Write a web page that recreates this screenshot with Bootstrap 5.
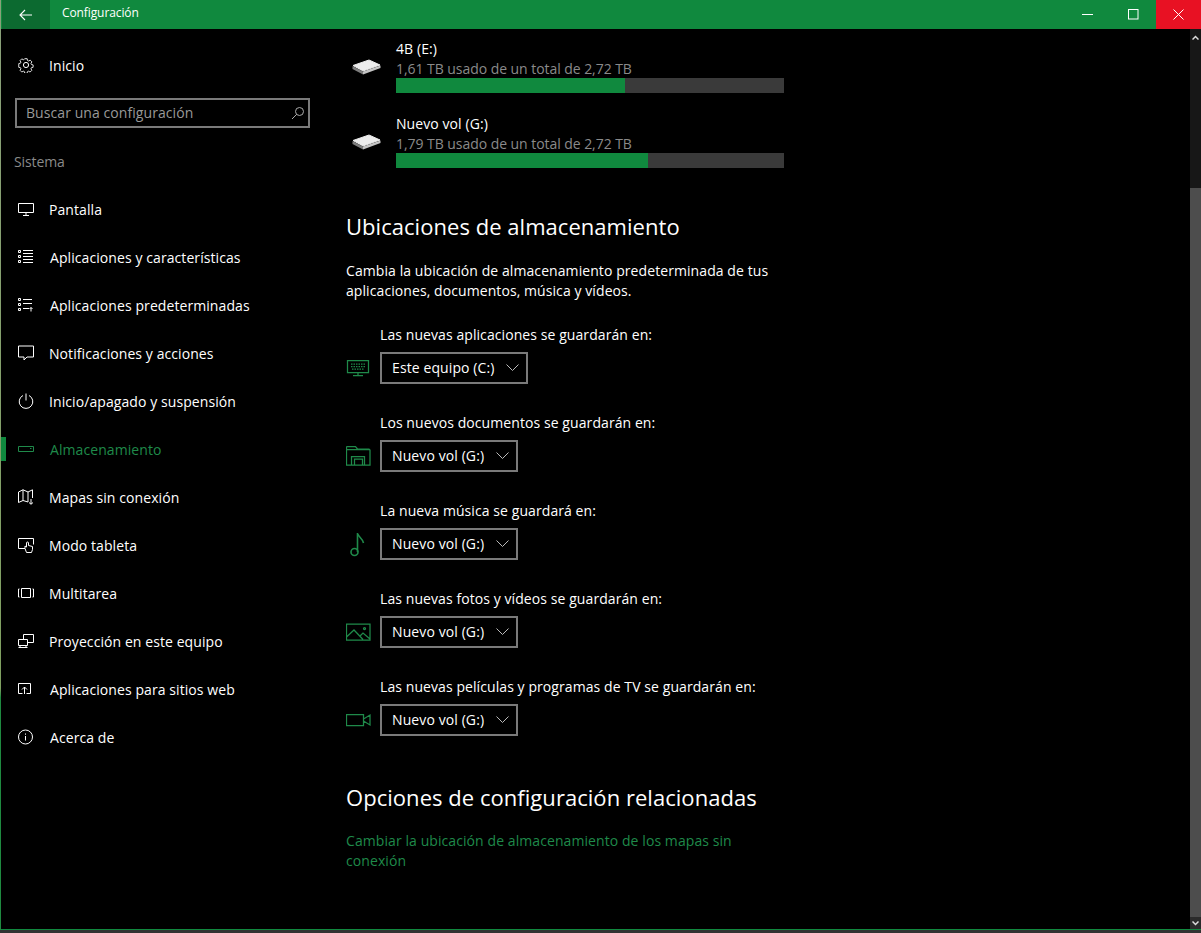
<!DOCTYPE html>
<html lang="es">
<head>
<meta charset="utf-8">
<title>Configuración</title>
<link href="https://cdn.jsdelivr.net/npm/bootstrap@5.3.0/dist/css/bootstrap.min.css" rel="stylesheet">
<style>
html,body{height:100%;background:#000;overflow:hidden}
body{font-family:"Open Sans","Noto Sans","Liberation Sans",sans-serif;font-size:14px;line-height:20px;color:#fff;letter-spacing:.08px}
.win-shell{height:933px;border-bottom:3px solid #333;background:#000;position:relative}
.win-edge{position:absolute;left:0;top:0;bottom:0;width:1px;background:linear-gradient(#8aa07a 0,#7fa060 74%,#1f8a40 75%,#1f8a40 100%)}
.win-title{height:29px;background:#10893e;font-size:12px;padding-left:2px}
.win-back{width:48px;height:29px;background:#0c6a30}
.win-name{margin-left:12px;letter-spacing:-.1px;padding-bottom:3px}
.win-ctl{width:46px;height:29px}
.win-close{width:45px;background:#e81123}
.win-body{height:901px;border-bottom:1px solid #10893e}
.side-col{width:330px;flex:none}
.side-home{height:48px;margin-top:12px;padding:2px 0 0 18px}
.ico-slot{width:31px;flex:none;display:flex;align-items:center;margin-top:-2px}
.ico-slot-w{width:32px}
.ico-slot svg,.pick-ico svg{fill:none;stroke:currentColor;stroke-width:1}
.find-box{margin:9px 20px 0 15px;height:30px;border:2px solid #7a7a7a;padding:0 3px 0 9px;color:#999;letter-spacing:.07px}
.side-head{margin:24px 0 0 14px;color:#8a8a8a;height:20px;letter-spacing:-.1px}
.side-list{margin-top:13px}
.side-row{height:48px;padding:2px 0 0 18px;color:#fff;position:relative}
.side-row.is-on{color:#1f8a4a}
.side-row.is-on::before{content:"";position:absolute;left:1px;top:12px;width:5px;height:24px;background:#10893e}
.main-col{min-width:0;padding:10px 0 0 16px}
.main-inner{width:438px}
.drive-row{margin-bottom:21px}
.drive-ico{width:50px;flex:none;padding-left:6px}
.drive-sub{color:#8a8a8a;letter-spacing:-.05px;margin-bottom:-1px}
.drive-bar{height:15px;background:#3a3a3a;border-radius:0;position:relative}
.drive-bar .progress-bar{background:#10893e}
.sec-title{font-size:22px;line-height:30px;font-weight:400;letter-spacing:.04px;margin:43px 0 0}
.sec-title-b{margin-top:46px}
.sec-text{margin:20px 0 0}
.pick-block{margin-top:29px}
.pick-block-a{margin-top:24px}
.pick-label{margin-left:34px;margin-bottom:7px}
.pick-ico{width:34px;flex:none;color:#1f8a4a;display:flex}
.pick-ico svg{stroke-width:1.25}
.pick-btn{height:32px;padding:0 7px 2px 10px;border:2px solid #7a7a7a;border-radius:0;color:#fff;background:#000;font-size:14px;letter-spacing:.1px;gap:12px}
.pick-btn:hover{color:#fff;background:#000;border-color:#7a7a7a}
.sec-link{display:block;margin-top:19px;color:#1f8a4a;text-decoration:none}
.scroll-col{width:11px;flex:none;background:#171717}
.scroll-btn{height:17px;background:#171717;color:#ddd}
.scroll-gap{height:142px}
.scroll-thumb{background:#4d4d4d}
.scroll-btn-b{height:12px;background:#2b2b2b}
</style>
</head>
<body>
<div class="win-shell d-flex flex-column">
  <span class="win-edge"></span>
  <header class="win-title d-flex align-items-center">
    <span class="win-back d-flex align-items-center justify-content-center">
      <svg width="14" height="12" viewBox="0 0 14 12" fill="none" stroke="#fff" stroke-width="1.1"><path d="M13 6H1M6 1 1 6l5 5"/></svg>
    </span>
    <span class="win-name flex-grow-1">Configuración</span>
    <span class="win-ctl d-flex align-items-center justify-content-center"><svg width="11" height="11" viewBox="0 0 11 11" stroke="#fff" fill="none"><path d="M0 5.5h11"/></svg></span>
    <span class="win-ctl d-flex align-items-center justify-content-center"><svg width="11" height="11" viewBox="0 0 11 11" stroke="#fff" fill="none"><rect x=".5" y=".5" width="9.5" height="9.5"/></svg></span>
    <span class="win-ctl win-close d-flex align-items-center justify-content-center"><svg width="11" height="11" viewBox="0 0 11 11" stroke="#fff" fill="none"><path d="M.5.5l10 10M10.500.5l-10 10"/></svg></span>
  </header>
  <div class="win-body d-flex">
    <aside class="side-col">
      <div class="side-home d-flex align-items-center">
        <span class="ico-slot"><svg width="16" height="16" viewBox="0 0 16 16"><circle cx="8" cy="8" r="2.6"/><path d="M6.600.7h2.800l.4 2.100 1.200.6 1.900-1 2 2-1.100 1.800.5 1.200 2 .5v2.800l-2 .5-.5 1.200 1 1.800-2 2-1.800-1-1.200.5-.5 2H6.600l-.5-2-1.200-.5-1.800 1-2-2 1-1.800-.5-1.200-2-.5V6.400l2-.5.5-1.200-1-1.800 2-2 1.800 1 1.200-.6z" transform="translate(1.100 1.100) scale(.86)"/></svg></span>
        <span>Inicio</span>
      </div>
      <div class="find-box d-flex align-items-center justify-content-between">
        <span>Buscar una configuración</span>
        <svg width="14" height="14" viewBox="0 0 14 14" fill="none" stroke="#aaa"><circle cx="8.500" cy="5.500" r="4"/><path d="M5.700 8.300 1 13"/></svg>
      </div>
      <div class="side-head">Sistema</div>
      <nav class="side-list">
        <a class="side-row d-flex align-items-center text-decoration-none" href="#"><span class="ico-slot"><svg width="16" height="16" viewBox="0 0 16 16"><path d="M.5 2.500h15v9H.5zM8 11.500v2.500M5 14.500h6"/></svg></span>Pantalla</a>
        <a class="side-row d-flex align-items-center text-decoration-none" href="#"><span class="ico-slot ico-slot-w"><svg width="16" height="16" viewBox="0 0 16 16"><path d="M.5 1.500h2v2h-2zM.5 6.500h2v2h-2zM.5 11.500h2v2h-2zM5 1.500h10M5 4.500h10M5 7.500h10M5 10.500h10M5 13.500h10"/></svg></span>Aplicaciones y características</a>
        <a class="side-row d-flex align-items-center text-decoration-none" href="#"><span class="ico-slot ico-slot-w"><svg width="16" height="16" viewBox="0 0 16 16"><path d="M.5 1.500h2v2h-2zM.5 6.500h2v2h-2zM.5 11.500h2v2h-2zM5 2.500h9M5 6.500h9M5 11.500h6M13 14.500v-4M11.500 12l1.500-1.500 1.500 1.500"/></svg></span>Aplicaciones predeterminadas</a>
        <a class="side-row d-flex align-items-center text-decoration-none" href="#"><span class="ico-slot"><svg width="16" height="16" viewBox="0 0 16 16"><path d="M.5 1h15v11H9l-3 3v-3H.5z"/></svg></span>Notificaciones y acciones</a>
        <a class="side-row d-flex align-items-center text-decoration-none" href="#"><span class="ico-slot"><svg width="16" height="16" viewBox="0 0 16 16"><path d="M8 .5v7M5 2.500a6.800 6.800 0 1 0 6 0"/></svg></span>Inicio/apagado y suspensión</a>
        <a class="side-row is-on d-flex align-items-center text-decoration-none" href="#"><span class="ico-slot ico-slot-w"><svg width="16" height="16" viewBox="0 0 16 16"><path d="M.5 5.500h15v5H.5zM12 7.500h1.500"/></svg></span>Almacenamiento</a>
        <a class="side-row d-flex align-items-center text-decoration-none" href="#"><span class="ico-slot"><svg width="16" height="16" viewBox="0 0 16 16"><path d="M.5 3 5 .8l5 2.200 4.500-2.200V9M.5 3v10.500L5 11.500l5 1.500M5 .8v10.700M10 3v10M13 10v5M11 13.500l2 1.800 2-1.800"/></svg></span>Mapas sin conexión</a>
        <a class="side-row d-flex align-items-center text-decoration-none" href="#"><span class="ico-slot"><svg width="16" height="16" viewBox="0 0 16 16"><path d="M7 11.500H.5V1.500h15v6M8.500 15.500 7 11.500V9l1.500 1V6a1 1 0 0 1 2 0v2.500l4 1v3l-1 3z"/></svg></span>Modo tableta</a>
        <a class="side-row d-flex align-items-center text-decoration-none" href="#"><span class="ico-slot"><svg width="16" height="16" viewBox="0 0 16 16"><path d="M3.500 3.500h9v9h-9zM1.500 4H.5v8h1M14.500 4h1v8h-1"/></svg></span>Multitarea</a>
        <a class="side-row d-flex align-items-center text-decoration-none" href="#"><span class="ico-slot"><svg width="16" height="16" viewBox="0 0 16 16"><path d="M5.500 6V1.500h10v8H10M.5 6.500h9v6h-9zM.5 14.500h9M2 12.500v2M8 12.500v2"/></svg></span>Proyección en este equipo</a>
        <a class="side-row d-flex align-items-center text-decoration-none" href="#"><span class="ico-slot ico-slot-w"><svg width="14" height="14" viewBox="0 0 14 14"><path d="M4.500 11.500H.5v-10h12v10h-4M6.500 12V5M4 7.500 6.500 5 9 7.500"/></svg></span>Aplicaciones para sitios web</a>
        <a class="side-row d-flex align-items-center text-decoration-none" href="#"><span class="ico-slot ico-slot-w"><svg width="16" height="16" viewBox="0 0 16 16"><circle cx="7.500" cy="8" r="7"/><path d="M7.500 7v4.500M7.500 4.500v1.200"/></svg></span>Acerca de</a>
      </nav>
    </aside>
    <main class="main-col flex-grow-1">
      <div class="main-inner">
        <section class="drive-row d-flex align-items-center">
          <span class="drive-ico"><svg width="29" height="17" viewBox="0 0 29 17"><path d="M1 6.500 17 1l11 5-17 6z" fill="#ececec" stroke="#ececec" stroke-linejoin="round"/><path d="M.5 7 11 12.500v3L.5 10z" fill="#7d7d7d"/><path d="M11 12.500l17.500-6V9L11 15.500z" fill="#c4c4c4"/></svg></span>
          <div class="flex-grow-1">
            <div>4B (E:)</div>
            <div class="drive-sub">1,61 TB usado de un total de 2,72 TB</div>
            <div class="progress drive-bar"><div class="progress-bar" style="width:59%"></div></div>
          </div>
        </section>
        <section class="drive-row mb-0 d-flex align-items-center">
          <span class="drive-ico"><svg width="29" height="17" viewBox="0 0 29 17"><path d="M1 6.500 17 1l11 5-17 6z" fill="#ececec" stroke="#ececec" stroke-linejoin="round"/><path d="M.5 7 11 12.500v3L.5 10z" fill="#7d7d7d"/><path d="M11 12.500l17.500-6V9L11 15.500z" fill="#c4c4c4"/></svg></span>
          <div class="flex-grow-1">
            <div>Nuevo vol (G:)</div>
            <div class="drive-sub">1,79 TB usado de un total de 2,72 TB</div>
            <div class="progress drive-bar"><div class="progress-bar" style="width:65%"></div></div>
          </div>
        </section>
        <h2 class="sec-title">Ubicaciones de almacenamiento</h2>
        <p class="sec-text">Cambia la ubicación de almacenamiento predeterminada de tus aplicaciones, documentos, música y vídeos.</p>

        <div class="pick-block pick-block-a">
          <div class="pick-label">Las nuevas aplicaciones se guardarán en:</div>
          <div class="d-flex align-items-center">
            <span class="pick-ico"><svg width="24" height="18" viewBox="0 0 24 18"><path d="M1.500 1.500h21v12h-21zM12 13.500v3M7 16.500h10"/><path d="M5 5h14M5 7.500h14M6 10h12" stroke-dasharray="1.500 1"/></svg></span>
            <button class="btn pick-btn d-flex align-items-center" type="button">Este equipo (C:)<svg width="13" height="7" viewBox="0 0 13 7" fill="none" stroke="#bbb"><path d="M.5.500l6 6 6-6"/></svg></button>
          </div>
        </div>
        <div class="pick-block">
          <div class="pick-label">Los nuevos documentos se guardarán en:</div>
          <div class="d-flex align-items-center">
            <span class="pick-ico"><svg width="25" height="22" viewBox="0 0 25 22"><path d="M.5 1.500h9l2 2.500h12M.5 4.500h23.500M.5 1.500V20h5V11.500h13V20h5.500V4.500M8.500 20v-6h8v6M6 20h12"/></svg></span>
            <button class="btn pick-btn d-flex align-items-center" type="button">Nuevo vol (G:)<svg width="13" height="7" viewBox="0 0 13 7" fill="none" stroke="#bbb"><path d="M.5.500l6 6 6-6"/></svg></button>
          </div>
        </div>
        <div class="pick-block">
          <div class="pick-label">La nueva música se guardará en:</div>
          <div class="d-flex align-items-center">
            <span class="pick-ico"><svg width="24" height="26" viewBox="0 0 24 26"><circle cx="8.500" cy="21" r="3.500" stroke-width="1.600"/><path d="M11.500 21V2c.5 4 5 5 6 10" stroke-width="1.600"/></svg></span>
            <button class="btn pick-btn d-flex align-items-center" type="button">Nuevo vol (G:)<svg width="13" height="7" viewBox="0 0 13 7" fill="none" stroke="#bbb"><path d="M.5.500l6 6 6-6"/></svg></button>
          </div>
        </div>
        <div class="pick-block">
          <div class="pick-label">Las nuevas fotos y vídeos se guardarán en:</div>
          <div class="d-flex align-items-center">
            <span class="pick-ico"><svg width="25" height="18" viewBox="0 0 25 18"><path d="M.5 1h23.500v16H.5zM.5 14 8 7l9 9.500M14 13l3-3 7 6"/><circle cx="18.500" cy="5.500" r="1"/></svg></span>
            <button class="btn pick-btn d-flex align-items-center" type="button">Nuevo vol (G:)<svg width="13" height="7" viewBox="0 0 13 7" fill="none" stroke="#bbb"><path d="M.5.500l6 6 6-6"/></svg></button>
          </div>
        </div>
        <div class="pick-block">
          <div class="pick-label">Las nuevas películas y programas de TV se guardarán en:</div>
          <div class="d-flex align-items-center">
            <span class="pick-ico"><svg width="25" height="14" viewBox="0 0 25 14"><path d="M.5 1.500h17v11H.5zM17.500 6l6.500-4v10l-6.500-4"/></svg></span>
            <button class="btn pick-btn d-flex align-items-center" type="button">Nuevo vol (G:)<svg width="13" height="7" viewBox="0 0 13 7" fill="none" stroke="#bbb"><path d="M.5.500l6 6 6-6"/></svg></button>
          </div>
        </div>

        <h2 class="sec-title sec-title-b">Opciones de configuración relacionadas</h2>
        <a class="sec-link" href="#">Cambiar la ubicación de almacenamiento de los mapas sin conexión</a>
      </div>
    </main>
    <div class="scroll-col d-flex flex-column">
      <div class="scroll-btn d-flex align-items-center justify-content-center"><svg width="7" height="5" viewBox="0 0 7 5" fill="none" stroke="#ddd" stroke-width="1.500"><path d="M.5 4.500l3-3 3 3"/></svg></div>
      <div class="scroll-gap"></div>
      <div class="scroll-thumb flex-grow-1"></div>
      <div class="scroll-btn scroll-btn-b d-flex align-items-center justify-content-center"><svg width="7" height="5" viewBox="0 0 7 5" fill="none" stroke="#ddd" stroke-width="1.500"><path d="M.5.500l3 3 3-3"/></svg></div>
    </div>
  </div>
</div>
<script src="https://cdn.jsdelivr.net/npm/bootstrap@5.3.0/dist/js/bootstrap.bundle.min.js"></script>
</body>
</html>
